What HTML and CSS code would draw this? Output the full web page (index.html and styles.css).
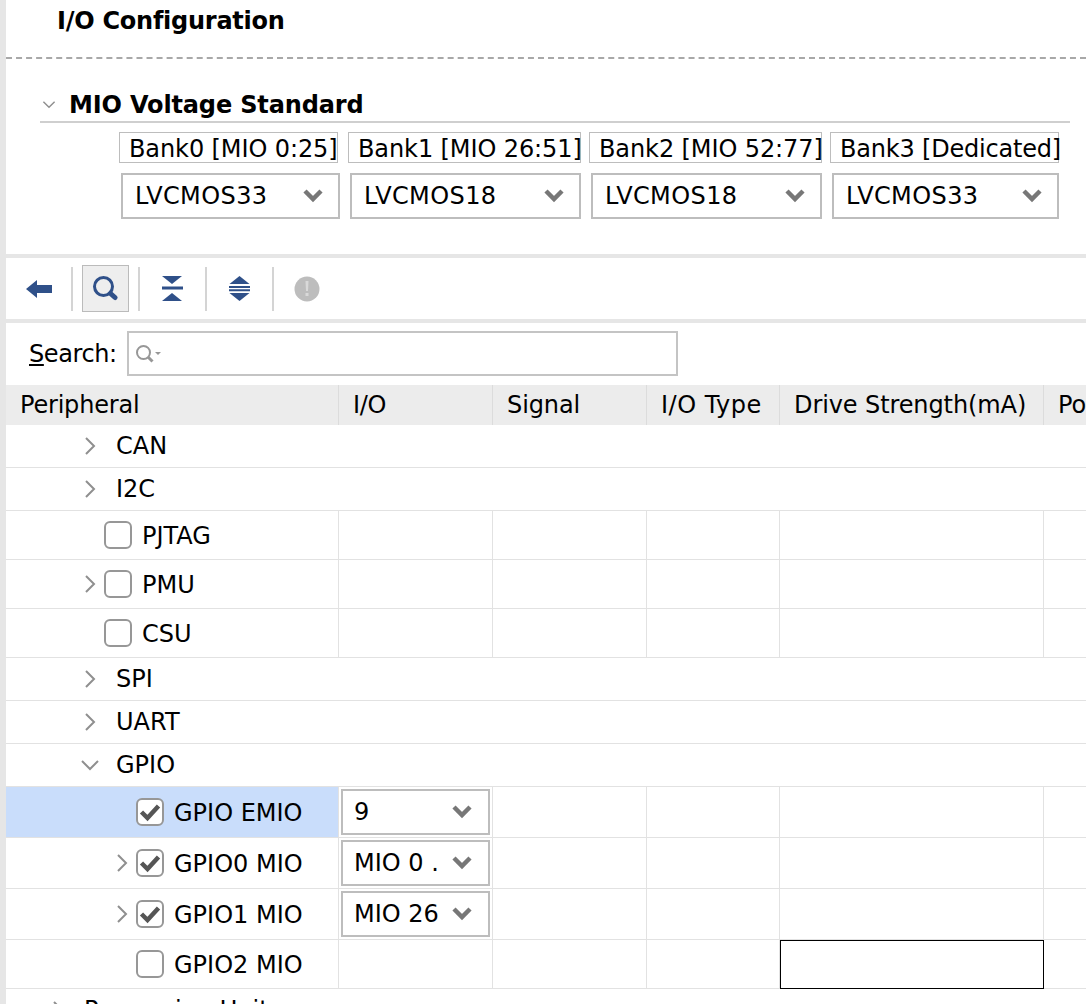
FILE: index.html
```html
<!DOCTYPE html>
<html lang="en">
<head>
  <meta charset="UTF-8" />
  <title>I/O Configuration</title>
  <link rel="stylesheet" href="styles.css">
</head>
<body>

<svg class="defs">
  <symbol id="chev-right" viewBox="0 0 12 20"><path d="M2 2l8 8-8 8" fill="none" stroke="#8f8f8f" stroke-width="2"/></symbol>
  <symbol id="chev-down" viewBox="0 0 20 12"><path d="M2 2l8 8 8-8" fill="none" stroke="#8f8f8f" stroke-width="2"/></symbol>
  <symbol id="drop" viewBox="0 0 22 16"><path d="M3 3l8 8 8-8" fill="none" stroke="#777" stroke-width="4.5"/></symbol>
  <symbol id="check" viewBox="0 0 28 28"><path d="M5.500 14l6 6L22.500 8" fill="none" stroke="#555" stroke-width="4.500"/></symbol>
</svg>

<main class="page">
  <h1 class="title">I/O Configuration</h1>

  <section class="voltage">
    <h2 class="section-head">
      <svg class="section-chev"><use href="#chev-down"/></svg>
      MIO Voltage Standard
    </h2>
    <div class="banks">
      <span class="bank">Bank0 [MIO 0:25]</span>
      <span class="bank">Bank1 [MIO 26:51]</span>
      <span class="bank">Bank2 [MIO 52:77]</span>
      <span class="bank">Bank3 [Dedicated]</span>
    </div>
    <div class="bank-selects">
      <div class="select"><span class="select-text">LVCMOS33</span><svg class="drop"><use href="#drop"/></svg></div>
      <div class="select"><span class="select-text">LVCMOS18</span><svg class="drop"><use href="#drop"/></svg></div>
      <div class="select"><span class="select-text">LVCMOS18</span><svg class="drop"><use href="#drop"/></svg></div>
      <div class="select"><span class="select-text">LVCMOS33</span><svg class="drop"><use href="#drop"/></svg></div>
    </div>
  </section>

  <div class="toolbar">
    <button class="tool">
      <svg viewBox="0 0 26 20" width="26" height="20"><path d="M0 10L11 1v5h15v8H11v5z" fill="#2f5089"/></svg>
    </button>
    <i class="tool-sep"></i>
    <button class="tool tool-on">
      <svg viewBox="0 0 25 25" width="25" height="25"><circle cx="10.500" cy="10.500" r="9" fill="none" stroke="#2f5089" stroke-width="3"/><path d="M17.500 17.500l4.500 4" stroke="#2f5089" stroke-width="5" stroke-linecap="round"/></svg>
    </button>
    <i class="tool-sep"></i>
    <button class="tool">
      <svg viewBox="0 0 21 25" width="21" height="25"><path d="M0 0h20L10 8zM0 10.500h21v3H0zM10 17l10 8H0z" fill="#2f5089"/></svg>
    </button>
    <i class="tool-sep"></i>
    <button class="tool">
      <svg viewBox="0 0 21 25" width="21" height="25"><path d="M10.500 0l10 8H.5zM0 10h21v2H0zM0 13.300h21v2H0zM.5 17h20l-10 8z" fill="#2f5089"/></svg>
    </button>
    <i class="tool-sep"></i>
    <button class="tool">
      <svg viewBox="0 0 26 26" width="26" height="26"><circle cx="13" cy="13" r="12.500" fill="#bdbdbd"/><path d="M11.500 5h3l-.5 10h-2zM11.500 17h3v3h-3z" fill="#d9d9d9"/></svg>
    </button>
  </div>

  <div class="search-row">
    <label class="search-label"><u>S</u>earch:</label>
    <div class="search-box">
      <svg viewBox="0 0 28 20" width="28" height="20"><circle cx="8.500" cy="8.500" r="6.500" fill="none" stroke="#979797" stroke-width="2"/><path d="M13 13l4.500 4.500" stroke="#979797" stroke-width="3"/><path d="M20 8h6l-3 3z" fill="#979797"/></svg>
    </div>
  </div>

  <div class="table">
    <div class="row head">
      <div class="cell">Peripheral</div>
      <div class="cell">I/O</div>
      <div class="cell">Signal</div>
      <div class="cell">I/O Type</div>
      <div class="cell">Drive Strength(mA)</div>
      <div class="cell">Po</div>
    </div>

    <div class="row group"><div class="tree lv1"><svg class="chev"><use href="#chev-right"/></svg><span class="gap"></span>CAN</div></div>
    <div class="row group"><div class="tree lv1"><svg class="chev"><use href="#chev-right"/></svg><span class="gap"></span>I2C</div></div>

    <div class="row item">
      <div class="tree lv1"><span class="chev"></span><span class="box"></span><span class="name">PJTAG</span></div>
      <div class="cell"></div><div class="cell"></div><div class="cell"></div><div class="cell"></div><div class="cell"></div>
    </div>
    <div class="row item">
      <div class="tree lv1"><svg class="chev"><use href="#chev-right"/></svg><span class="box"></span><span class="name">PMU</span></div>
      <div class="cell"></div><div class="cell"></div><div class="cell"></div><div class="cell"></div><div class="cell"></div>
    </div>
    <div class="row item">
      <div class="tree lv1"><span class="chev"></span><span class="box"></span><span class="name">CSU</span></div>
      <div class="cell"></div><div class="cell"></div><div class="cell"></div><div class="cell"></div><div class="cell"></div>
    </div>

    <div class="row group"><div class="tree lv1"><svg class="chev"><use href="#chev-right"/></svg><span class="gap"></span>SPI</div></div>
    <div class="row group"><div class="tree lv1"><svg class="chev"><use href="#chev-right"/></svg><span class="gap"></span>UART</div></div>
    <div class="row group"><div class="tree lv1"><svg class="chev chev-open"><use href="#chev-down"/></svg><span class="gap"></span>GPIO</div></div>

    <div class="row gpio">
      <div class="tree lv2 selected"><span class="chev"></span><span class="box"><svg><use href="#check"/></svg></span><span class="name">GPIO EMIO</span></div>
      <div class="cell cell-select"><div class="select"><span class="select-text">9</span><svg class="drop"><use href="#drop"/></svg></div></div>
      <div class="cell"></div><div class="cell"></div><div class="cell"></div><div class="cell"></div>
    </div>
    <div class="row gpio">
      <div class="tree lv2"><svg class="chev"><use href="#chev-right"/></svg><span class="box"><svg><use href="#check"/></svg></span><span class="name">GPIO0 MIO</span></div>
      <div class="cell cell-select"><div class="select"><span class="select-text">MIO 0 .</span><svg class="drop"><use href="#drop"/></svg></div></div>
      <div class="cell"></div><div class="cell"></div><div class="cell"></div><div class="cell"></div>
    </div>
    <div class="row gpio">
      <div class="tree lv2"><svg class="chev"><use href="#chev-right"/></svg><span class="box"><svg><use href="#check"/></svg></span><span class="name">GPIO1 MIO</span></div>
      <div class="cell cell-select"><div class="select"><span class="select-text">MIO 26</span><svg class="drop"><use href="#drop"/></svg></div></div>
      <div class="cell"></div><div class="cell"></div><div class="cell"></div><div class="cell"></div>
    </div>
    <div class="row item">
      <div class="tree lv2"><span class="chev"></span><span class="box"></span><span class="name">GPIO2 MIO</span></div>
      <div class="cell"></div><div class="cell"></div><div class="cell"></div>
      <div class="cell cell-focus"></div>
      <div class="cell"></div>
    </div>

    <div class="row group"><div class="tree lv0"><svg class="chev"><use href="#chev-right"/></svg><span class="gap"></span>Processing Units</div></div>
  </div>
</main>

</body>
</html>
```

FILE: styles.css
```css
html, body {
  margin: 0;
  padding: 0;
  height: 1004px;
  overflow: hidden;
  background: #fff;
  color: #000;
  font-family: "DejaVu Sans", sans-serif;
  font-size: 24px;
}

.defs {
  display: none;
}

.page {
  margin-left: 6px;
  height: 1004px;
  background: #fff;
  box-shadow: -6px 0 0 #e6e6e6;
  overflow: hidden;
}

/* heading */
.title {
  margin: 0;
  height: 23px;
  padding: 8px 0 26px 51px;
  font-size: 24px;
  line-height: 27px;
  letter-spacing: -.25px;
  border-bottom: 2px dashed #a8a8a8;
}

/* voltage section */
.voltage {
  height: 195px;
  box-sizing: border-box;
  padding-top: 29px;
}

.section-head {
  display: flex;
  align-items: center;
  margin: 0 16px 0 34px;
  height: 33px;
  font-size: 24px;
  letter-spacing: -.15px;
  border-bottom: 2px solid #cfcfcf;
}

.section-chev {
  width: 14px;
  height: 9px;
  margin: 0 13px 0 2px;
}

.banks {
  display: flex;
  gap: 10px;
  margin: 9px 0 0 113px;
}

.bank {
  flex: none;
  box-sizing: border-box;
  height: 31px;
  padding: 3px 0 0 9px;
  line-height: 26px;
  letter-spacing: -.1px;
  white-space: nowrap;
  border: 1px solid #bdbdbd;
}

.bank:nth-child(1) { width: 219px; }
.bank:nth-child(2) { width: 233px; }
.bank:nth-child(3) { width: 233px; margin-left: -2px; }
.bank:nth-child(4) { width: 229px; margin-left: -2px; letter-spacing: -.2px; }

.bank-selects {
  display: flex;
  margin: 10px 0 0 115px;
}

.bank-selects .select {
  height: 46px;
  letter-spacing: .4px;
}

.bank-selects .select:nth-child(1) { width: 219px; }
.bank-selects .select:nth-child(2) { width: 231px; margin-left: 10px; }
.bank-selects .select:nth-child(3) { width: 231px; margin-left: 10px; }
.bank-selects .select:nth-child(4) { width: 227px; margin-left: 10px; }

.select {
  display: flex;
  align-items: center;
  box-sizing: border-box;
  border: 2px solid #bdbdbd;
  background: #fff;
  padding: 0 14px 0 12px;
}

.select-text {
  flex: 1;
  overflow: hidden;
  white-space: nowrap;
}

.drop {
  flex: none;
  width: 22px;
  height: 16px;
  margin-left: 2px;
}

/* toolbar */
.toolbar {
  display: flex;
  align-items: center;
  height: 61px;
  border-top: 4px solid #e6e6e6;
  border-bottom: 4px solid #e6e6e6;
  padding-left: 10px;
}

.tool {
  display: flex;
  align-items: center;
  justify-content: center;
  width: 47px;
  height: 47px;
  padding: 0;
  border: 1px solid transparent;
  background: none;
}

.tool-on {
  background: #eee;
  border-color: #bbb;
}

.tool-sep {
  width: 2px;
  height: 44px;
  margin: 0 9px;
  background: #d4d4d4;
}

.toolbar .tool:first-child { width: 46px; }

/* search */
.search-row {
  display: flex;
  align-items: flex-start;
  height: 62px;
  box-sizing: border-box;
  padding: 8px 0 0 23px;
}

.search-label {
  width: 98px;
  line-height: 46px;
  letter-spacing: -.4px;
}

.search-box {
  display: flex;
  align-items: center;
  box-sizing: border-box;
  width: 551px;
  height: 45px;
  padding-left: 6px;
  border: 2px solid #c4c4c4;
}

/* table */
.row {
  display: grid;
  grid-template-columns: 333px 154px 154px 133px 264px 1fr;
  box-sizing: border-box;
  border-bottom: 1px solid #e2e2e2;
}

.row > .tree:only-child {
  grid-column: 1 / -1;
  border-right: 0;
}

.head {
  height: 40px;
  background: #ececec;
  border-bottom: 0;
}

.head .cell {
  padding-left: 14px;
  line-height: 40px;
  white-space: nowrap;
  overflow: hidden;
  border-right-color: #dcdcdc;
}

.head .cell:nth-child(1) { letter-spacing: -.2px; }
.head .cell:nth-child(2) { letter-spacing: -.3px; }
.head .cell:nth-child(3) { letter-spacing: -.1px; }
.head .cell:nth-child(4) { letter-spacing: .5px; }
.head .cell:nth-child(5) { letter-spacing: -.1px; }

.group { height: 43px; }
.item { height: 49px; }
.gpio { height: 51px; }

.cell {
  box-sizing: border-box;
  border-right: 1px solid #e2e2e2;
  min-width: 0;
}

.cell:last-child {
  border-right: 0;
}

.cell-select {
  padding: 2px 2px 0 2px;
}

.cell-select .select {
  height: 46px;
  padding: 0 15px 0 11px;
}

.cell-select .select-text {
  flex: none;
  width: 84px;
}

.cell-select .drop {
  margin-left: auto;
}

.cell-focus {
  border: 1px solid #000;
  margin-bottom: -1px;
}

.tree {
  display: flex;
  align-items: center;
  box-sizing: border-box;
  border-right: 1px solid #e2e2e2;
  white-space: nowrap;
}

.tree.lv0 { padding-left: 46px; }
.tree.lv1 { padding-left: 78px; }
.tree.lv2 { padding-left: 110px; }

.selected {
  background: #c9ddfb;
}

.name {
  margin-top: 2px;
}

.chev {
  flex: none;
  width: 12px;
  height: 20px;
  margin-right: 8px;
}

.chev-open {
  width: 20px;
  height: 12px;
  margin-left: -4px;
  margin-right: 4px;
}

.gap {
  width: 12px;
}

.box {
  flex: none;
  box-sizing: border-box;
  width: 28px;
  height: 28px;
  margin-right: 10px;
  border: 2.5px solid #979797;
  border-radius: 6px;
  background: #fff;
}

.box svg {
  display: block;
  width: 28px;
  height: 28px;
  margin: -2.5px;
}
```
